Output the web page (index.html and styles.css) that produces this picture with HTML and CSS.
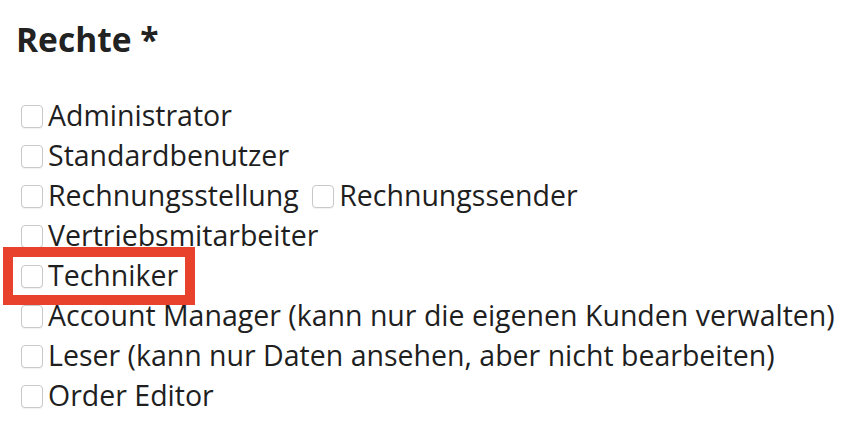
FILE: index.html
```html
<!DOCTYPE html>
<html lang="de">
<head>
<meta charset="utf-8">
<link rel="stylesheet" href="styles.css">
</head>
<body>
<div class="form-group">
  <h2 class="title">Rechte *</h2>
  <div class="options">
    <div class="row"><label><input type="checkbox" class="cb">Administrator</label></div>
    <div class="row"><label><input type="checkbox" class="cb">Standardbenutzer</label></div>
    <div class="row"><label><input type="checkbox" class="cb">Rechnungsstellung</label> <label><input type="checkbox" class="cb cb-inline">Rechnungssender</label></div>
    <div class="row"><label><input type="checkbox" class="cb">Vertriebsmitarbeiter</label></div>
    <div class="row"><label><input type="checkbox" class="cb">Techniker</label></div>
    <div class="row"><label><input type="checkbox" class="cb">Account Manager (kann nur die eigenen Kunden verwalten)</label></div>
    <div class="row"><label><input type="checkbox" class="cb">Leser (kann nur Daten ansehen, aber nicht bearbeiten)</label></div>
    <div class="row"><label><input type="checkbox" class="cb">Order Editor</label></div>
  </div>
  <div class="highlight"></div>
</div>
</body>
</html>
```
FILE: styles.css
```css
html, body {
  margin: 0;
  padding: 0;
  background: #ffffff;
}
body {
  font-family: "Open Sans", "DejaVu Sans", sans-serif;
  color: #222222;
  width: 854px;
  height: 430px;
  overflow: hidden;
}
.form-group {
  position: relative;
  padding-top: 19px;
}
.title {
  margin: 0;
  padding-left: 16px;
  font-size: 33.5px;
  line-height: 40px;
  font-weight: 700;
  color: #222222;
}
.options {
  margin-top: 36px;
  padding-left: 21px;
}
.row {
  font-size: 28.5px;
  line-height: 40px;
  white-space: nowrap;
  color: #1f1f1f;
}
.cb {
  -webkit-appearance: none;
  appearance: none;
  box-sizing: border-box;
  width: 22px;
  height: 23px;
  margin: 0 5px 0 0;
  border: 1px solid #c9c9c9;
  border-radius: 4px;
  background: #ffffff;
  box-shadow: 0 1px 1px rgba(0, 0, 0, 0.06);
  vertical-align: middle;
  position: relative;
  top: -2px;
}
.cb-inline {
  margin-left: 6px;
}
.highlight {
  position: absolute;
  left: 3px;
  top: 247px;
  width: 192px;
  height: 58px;
  box-sizing: border-box;
  border: 10px solid #e8412c;
  pointer-events: none;
}
```
